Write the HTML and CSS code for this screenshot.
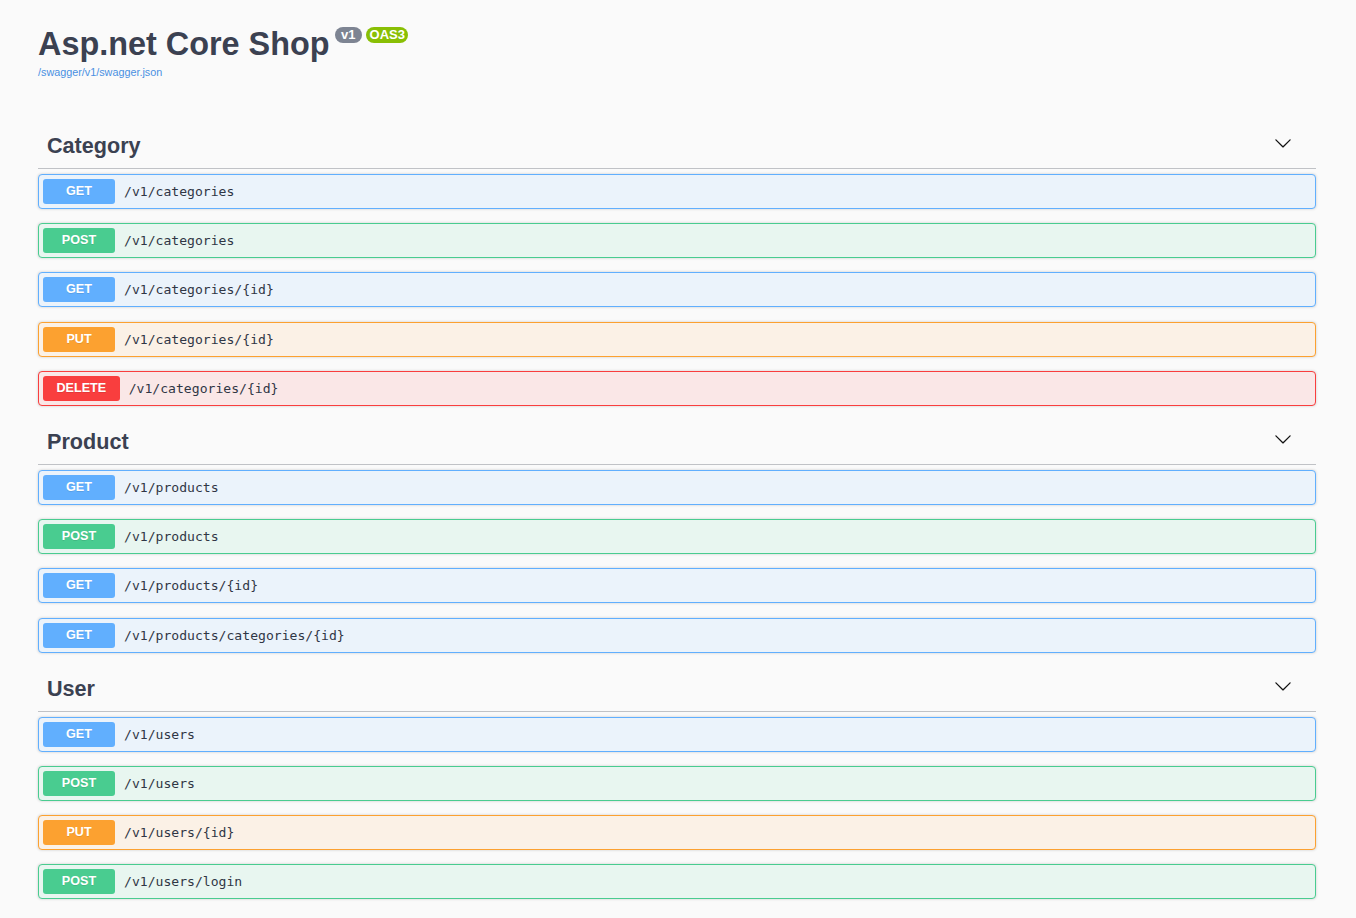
FILE: index.html
```html
<!DOCTYPE html>
<html lang="en">
<head>
<meta charset="utf-8">
<title>Asp.net Core Shop</title>
<link rel="stylesheet" href="styles.css">
</head>
<body>
<div class="wrapper">
  <div class="info">
    <h2 class="title">Asp.net Core Shop<span class="badges"><span class="badge badge-version">v1</span><span class="badge badge-oas">OAS3</span></span></h2>
    <a class="link" href="#">/swagger/v1/swagger.json</a>
  </div>

  <section class="tag-section">
    <h3 class="tag"><span class="tag-name">Category</span><svg class="chev" viewBox="0 0 20 20" width="18" height="18"><path d="M17.418 6.109c.272-.268.709-.268.979 0s.271.701 0 .969l-7.908 7.83c-.27.268-.707.268-.979 0l-7.908-7.83c-.27-.268-.27-.701 0-.969.271-.268.709-.268.979 0L10 13.25l7.418-7.141z"/></svg></h3>
    <div class="op op-get"><span class="method">GET</span><span class="path">/v1/categories</span></div>
    <div class="op op-post"><span class="method">POST</span><span class="path">/v1/categories</span></div>
    <div class="op op-get"><span class="method">GET</span><span class="path">/v1/categories/{id}</span></div>
    <div class="op op-put"><span class="method">PUT</span><span class="path">/v1/categories/{id}</span></div>
    <div class="op op-delete"><span class="method">DELETE</span><span class="path">/v1/categories/{id}</span></div>
  </section>

  <section class="tag-section">
    <h3 class="tag"><span class="tag-name">Product</span><svg class="chev" viewBox="0 0 20 20" width="18" height="18"><path d="M17.418 6.109c.272-.268.709-.268.979 0s.271.701 0 .969l-7.908 7.83c-.27.268-.707.268-.979 0l-7.908-7.83c-.27-.268-.27-.701 0-.969.271-.268.709-.268.979 0L10 13.25l7.418-7.141z"/></svg></h3>
    <div class="op op-get"><span class="method">GET</span><span class="path">/v1/products</span></div>
    <div class="op op-post"><span class="method">POST</span><span class="path">/v1/products</span></div>
    <div class="op op-get"><span class="method">GET</span><span class="path">/v1/products/{id}</span></div>
    <div class="op op-get"><span class="method">GET</span><span class="path">/v1/products/categories/{id}</span></div>
  </section>

  <section class="tag-section">
    <h3 class="tag"><span class="tag-name">User</span><svg class="chev" viewBox="0 0 20 20" width="18" height="18"><path d="M17.418 6.109c.272-.268.709-.268.979 0s.271.701 0 .969l-7.908 7.83c-.27.268-.707.268-.979 0l-7.908-7.83c-.27-.268-.27-.701 0-.969.271-.268.709-.268.979 0L10 13.25l7.418-7.141z"/></svg></h3>
    <div class="op op-get"><span class="method">GET</span><span class="path">/v1/users</span></div>
    <div class="op op-post"><span class="method">POST</span><span class="path">/v1/users</span></div>
    <div class="op op-put"><span class="method">PUT</span><span class="path">/v1/users/{id}</span></div>
    <div class="op op-post"><span class="method">POST</span><span class="path">/v1/users/login</span></div>
  </section>
</div>
</body>
</html>
```

FILE: styles.css
```css
html, body {
  margin: 0;
  padding: 0;
  background: #fafafa;
}

body {
  font-family: "Liberation Sans", Arial, sans-serif;
  color: #3b4151;
}

.wrapper {
  padding: 26px 40px 0 38px;
}

.info {
  display: flex;
  flex-direction: column;
  align-items: flex-start;
  margin-bottom: 45px;
}

.title {
  margin: 0;
  font-size: 32.4px;
  line-height: 36px;
  font-weight: bold;
  color: #3b4151;
  display: flex;
  align-items: flex-start;
}

.badges {
  display: flex;
  gap: 4px;
  margin-left: 5px;
  margin-top: 1px;
}

.badge {
  display: inline-block;
  height: 16px;
  line-height: 16px;
  font-size: 13px;
  font-weight: bold;
  color: #fff;
  border-radius: 57px;
  font-family: "Liberation Sans", Arial, sans-serif;
}

.badge-version {
  background: #7d8492;
  padding: 0 6.5px;
}

.badge-oas {
  background: #89bf04;
  padding: 0 3.5px;
}

.link {
  margin-top: 4px;
  font-size: 10.8px;
  line-height: 13px;
  color: #4990e2;
  text-decoration: none;
}

.tag-section {
  display: flex;
  flex-direction: column;
}

.tag {
  margin: 0 0 5px;
  padding: 9px 24px 9px 9px;
  display: flex;
  align-items: center;
  justify-content: space-between;
  border-bottom: 1px solid rgba(59, 65, 81, 0.3);
  font-size: 21.6px;
  line-height: 26px;
  font-weight: bold;
  color: #3b4151;
}

.chev {
  align-self: flex-start;
  margin-top: 1px;
  fill: #111;
}

.op {
  display: flex;
  align-items: center;
  height: 35px;
  box-sizing: border-box;
  padding: 4px;
  margin-bottom: 14.2px;
  border: 1px solid;
  border-radius: 4px;
  box-shadow: 0 0 3px rgba(0, 0, 0, 0.19);
}

.method {
  min-width: 72px;
  padding: 0 13.5px;
  box-sizing: border-box;
  height: 25px;
  line-height: 25px;
  text-align: center;
  font-size: 12.6px;
  font-weight: bold;
  color: #fff;
  border-radius: 3px;
  text-shadow: 0 1px 0 rgba(0, 0, 0, 0.1);
}

.path {
  padding: 0 9px;
  font-family: "DejaVu Sans Mono", "Liberation Mono", monospace;
  font-size: 13.1px;
  font-weight: normal;
  color: #303645;
}

.op-get { background: #ebf3fb; border-color: #61affe; }
.op-get .method { background: #61affe; }

.op-post { background: #e8f6f0; border-color: #49cc90; }
.op-post .method { background: #49cc90; }

.op-put { background: #fbf1e6; border-color: #fca130; }
.op-put .method { background: #fca130; }

.op-delete { background: #fae7e7; border-color: #f93e3e; }
.op-delete .method { background: #f93e3e; }
```
